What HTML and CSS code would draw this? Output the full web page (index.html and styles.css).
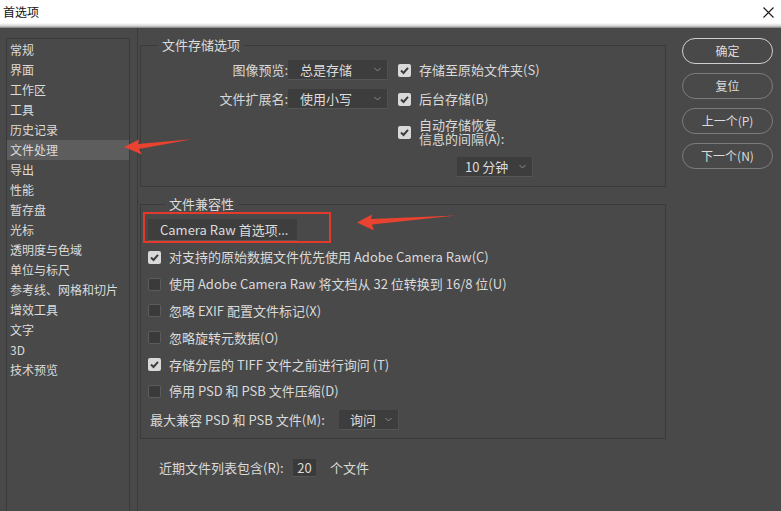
FILE: index.html
```html
<!DOCTYPE html>
<html lang="zh-CN">
<head>
<meta charset="utf-8">
<title>首选项</title>
<link rel="stylesheet" href="styles.css">
</head>
<body>
<div class="titlebar">
  <span class="title">首选项</span>
  <svg class="close" width="11" height="11" viewBox="0 0 11 11"><path d="M0.5 0.5L10.5 10.5M10.5 0.5L0.5 10.5" stroke="#1a1a1a" stroke-width="1.1" fill="none"/></svg>
</div>
<div class="main">
  <ul class="nav">
    <li>常规</li>
    <li>界面</li>
    <li>工作区</li>
    <li>工具</li>
    <li>历史记录</li>
    <li class="sel">文件处理</li>
    <li>导出</li>
    <li>性能</li>
    <li>暂存盘</li>
    <li>光标</li>
    <li>透明度与色域</li>
    <li>单位与标尺</li>
    <li>参考线、网格和切片</li>
    <li>增效工具</li>
    <li>文字</li>
    <li>3D</li>
    <li>技术预览</li>
  </ul>
  <div class="content">
    <fieldset class="group g1">
      <legend>文件存储选项</legend>
      <div class="grid1">
        <span class="lbl">图像预览:</span>
        <div class="select w100"><span>总是存储</span><svg class="chev" width="7" height="5" viewBox="0 0 7 5"><path d="M0.5 1L3.5 4L6.5 1" stroke="#8c8c8c" fill="none"/></svg></div>
        <div class="check c3"><span class="box on"><svg width="13" height="13" viewBox="0 0 13 13"><path d="M3 6.5L5.5 9L10 3.8" stroke="#3c3c3c" stroke-width="2" fill="none"/></svg></span><span>存储至原始文件夹(S)</span></div>

        <span class="lbl">文件扩展名:</span>
        <div class="select w100"><span>使用小写</span><svg class="chev" width="7" height="5" viewBox="0 0 7 5"><path d="M0.5 1L3.5 4L6.5 1" stroke="#8c8c8c" fill="none"/></svg></div>
        <div class="check c3"><span class="box on"><svg width="13" height="13" viewBox="0 0 13 13"><path d="M3 6.5L5.5 9L10 3.8" stroke="#3c3c3c" stroke-width="2" fill="none"/></svg></span><span>后台存储(B)</span></div>

        <div class="check c3 full"><span class="box on"><svg width="13" height="13" viewBox="0 0 13 13"><path d="M3 6.5L5.5 9L10 3.8" stroke="#3c3c3c" stroke-width="2" fill="none"/></svg></span><span class="two"><span class="ln">自动存储恢复</span><span class="ln">信息的间隔(A):</span></span></div>

        <div class="select w76 full interval"><span>10 分钟</span><svg class="chev" width="7" height="5" viewBox="0 0 7 5"><path d="M0.5 1L3.5 4L6.5 1" stroke="#8c8c8c" fill="none"/></svg></div>
      </div>
    </fieldset>

    <fieldset class="group g2">
      <legend>文件兼容性</legend>
      <div class="rawbtn">Camera Raw 首选项...</div>
      <div class="rows">
        <div class="check row"><span class="box on"><svg width="13" height="13" viewBox="0 0 13 13"><path d="M3 6.5L5.5 9L10 3.8" stroke="#3c3c3c" stroke-width="2" fill="none"/></svg></span><span>对支持的原始数据文件优先使用 Adobe Camera Raw(C)</span></div>
        <div class="check row"><span class="box"></span><span>使用 Adobe Camera Raw 将文档从 32 位转换到 16/8 位(U)</span></div>
        <div class="check row"><span class="box"></span><span>忽略 EXIF 配置文件标记(X)</span></div>
        <div class="check row"><span class="box"></span><span>忽略旋转元数据(O)</span></div>
        <div class="check row"><span class="box on"><svg width="13" height="13" viewBox="0 0 13 13"><path d="M3 6.5L5.5 9L10 3.8" stroke="#3c3c3c" stroke-width="2" fill="none"/></svg></span><span>存储分层的 TIFF 文件之前进行询问 (T)</span></div>
        <div class="check row"><span class="box"></span><span>停用 PSD 和 PSB 文件压缩(D)</span></div>
        <div class="row maxrow"><span class="maxlbl">最大兼容 PSD 和 PSB 文件(M):</span><div class="select w60"><span>询问</span><svg class="chev" width="7" height="5" viewBox="0 0 7 5"><path d="M0.5 1L3.5 4L6.5 1" stroke="#8c8c8c" fill="none"/></svg></div></div>
      </div>
    </fieldset>

    <div class="recent">
      <span class="reclbl">近期文件列表包含(R):</span>
      <span class="num">20</span>
      <span class="unit">个文件</span>
    </div>
  </div>
  <div class="buttons">
    <div class="btn primary">确定</div>
    <div class="btn">复位</div>
    <div class="btn">上一个(P)</div>
    <div class="btn">下一个(N)</div>
  </div>
</div>

<div class="redbox"></div>
<svg class="arrows" width="781" height="511" viewBox="0 0 781 511">
  <polygon points="124,147 139,139.5 138,144 192,139.2 139,149 142,154.5" fill="#ea4230"/>
  <polygon points="357,222.5 372,214.5 371,219 456,215.5 372,224.5 374,230.5" fill="#ea4230"/>
</svg>
</body>
</html>
```

FILE: styles.css
```css
html, body {
  margin: 0;
  padding: 0;
}
body {
  width: 781px;
  height: 511px;
  overflow: hidden;
  position: relative;
  background: #494949;
  font-family: "Noto Sans CJK SC", "Noto Sans", sans-serif;
  color: #dadada;
}
.titlebar {
  height: 28px;
  box-sizing: border-box;
  padding: 0 7px 4px 3px;
  display: flex;
  align-items: center;
  justify-content: space-between;
  background: linear-gradient(#ffffff 0, #ffffff 23px, #d2d2d2 26px, #7a7a7a 28px);
}
.title {
  font-size: 12px;
  color: #111;
  line-height: 16px;
}
.main {
  display: flex;
  height: 483px;
}
.nav {
  list-style: none;
  margin: 10px 0 0 6px;
  padding: 1px 0;
  width: 124px;
  box-sizing: border-box;
  border: 1px solid #3a3a3a;
  border-bottom: none;
  font-size: 12px;
}
.nav li {
  height: 20px;
  line-height: 20px;
  padding-left: 3px;
  color: #dcdcdc;
}
.nav li.sel {
  background: #5d5d5d;
}
.content {
  margin-left: 7px;
  width: 530px;
  box-sizing: border-box;
  border-left: 1px solid #3b3b3b;
  padding-left: 2px;
  font-size: 13px;
}
.group {
  margin: 9px 0 0;
  padding: 0;
  width: 526px;
  box-sizing: border-box;
  border: 1px solid #3a3a3a;
  min-width: 0;
}
.group legend {
  margin-left: 17px;
  padding: 0 4px;
  font-size: 13px;
  line-height: 16px;
  color: #dcdcdc;
}
.g1 {
  padding: 7px 0 9px 0;
}
.grid1 {
  display: grid;
  grid-template-columns: 147px 100px auto;
  grid-auto-rows: auto;
  row-gap: 9px;
  align-items: center;
}
.lbl {
  text-align: right;
  line-height: 20px;
  color: #d8d8d8;
}
.c3 {
  grid-column: 3;
  margin-left: 10px;
}
.full {
  grid-column: 3;
}
.select {
  height: 20px;
  box-sizing: border-box;
  display: flex;
  align-items: center;
  justify-content: space-between;
  background: #3d3d3d;
  border-bottom: 1px solid #555;
  border-right: 1px solid #505050;
  padding: 0 6px 0 12px;
  color: #dcdcdc;
  line-height: 20px;
}
.w100 { width: 100px; }
.w76 { width: 76px; padding-left: 8px; }
.w60 { width: 60px; padding-left: 11px; }
.interval {
  margin-left: 69px;
  margin-top: 2px;
}
.check {
  display: flex;
  align-items: center;
  gap: 8px;
  line-height: 20px;
}
.box {
  width: 13px;
  height: 13px;
  box-sizing: border-box;
  flex: none;
  background: #3a3a3a;
  border: 1px solid #5c5c5c;
  border-radius: 2px;
  display: flex;
}
.box.on {
  background: #d9d9d9;
  border: none;
}
.box svg { display: block; }
.two {
  display: flex;
  flex-direction: column;
}
.two .ln {
  height: 14px;
  line-height: 14px;
}
.g2 {
  padding: 7px 0 4px 7px;
}
.rawbtn {
  width: 149px;
  height: 22px;
  box-sizing: border-box;
  background: #3e3e3e;
  border-bottom: 1px solid #565656;
  padding-left: 12px;
  line-height: 22px;
  color: #dcdcdc;
}
.rows {
  margin-top: 3px;
}
.row {
  height: 26.8px;
}
.maxrow {
  height: 27px;
  margin-top: 2px;
  display: flex;
  align-items: center;
  padding-left: 2px;
}
.maxlbl {
  width: 189px;
  flex: none;
  line-height: 20px;
}
.recent {
  margin-top: 19px;
  height: 20px;
  display: flex;
  align-items: center;
  padding-left: 19px;
}
.reclbl {
  width: 134px;
  flex: none;
}
.num {
  width: 23px;
  height: 18px;
  box-sizing: border-box;
  background: #3a3a3a;
  border-bottom: 1px solid #555;
  text-align: center;
  line-height: 18px;
}
.unit {
  margin-left: 14px;
}
.buttons {
  margin: 10px 0 0 15px;
  width: 91px;
  display: flex;
  flex-direction: column;
  gap: 9px;
}
.btn {
  height: 26px;
  box-sizing: border-box;
  border: 1px solid #7c7c7c;
  border-radius: 13px;
  text-align: center;
  line-height: 24px;
  font-size: 12px;
  color: #dcdcdc;
}
.btn.primary {
  border: 1.5px solid #cfcfcf;
}
.redbox {
  position: absolute;
  left: 143px;
  top: 212px;
  width: 188px;
  height: 31px;
  box-sizing: border-box;
  border: 2.5px solid #e43a2c;
}
.arrows {
  position: absolute;
  left: 0;
  top: 0;
  pointer-events: none;
}
```
